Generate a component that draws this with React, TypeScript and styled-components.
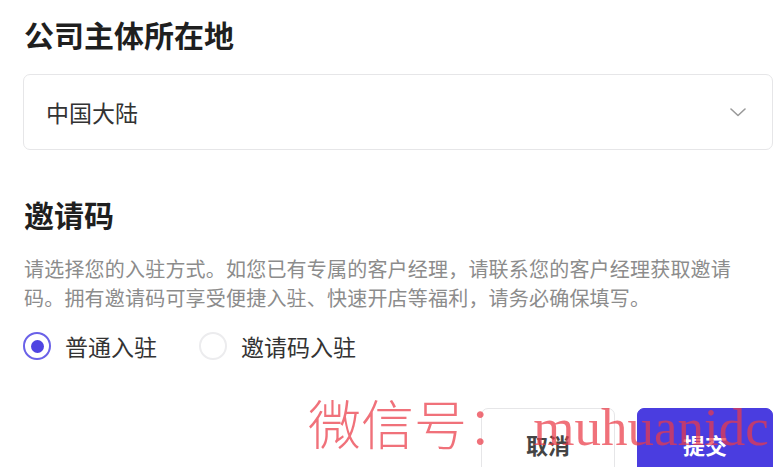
import React, { useState } from "react";
import styled, { createGlobalStyle } from "styled-components";

const Global = createGlobalStyle`
  html, body { margin: 0; padding: 0; background: #ffffff; overflow: hidden; }
  body { font-family: "Noto Sans CJK SC", "Noto Sans", sans-serif; color: #2b2b2b; }
  * { box-sizing: border-box; }
`;

const Page = styled.div`
  position: relative;
  width: 782px;
  height: 467px;
  overflow: hidden;
  padding: 14px 9px 0 23px;
  display: flex;
  flex-direction: column;
  & > * { flex-shrink: 0; }
`;

const SectionTitle = styled.h2<{ $gap?: number }>`
  margin: ${(p) => p.$gap ?? 0}px 0 0 1px;
  font-size: 30px;
  line-height: 40px;
  font-weight: 600;
  color: #1f1f1f;
`;

const Select = styled.div`
  margin-top: 20px;
  height: 76px;
  border: 1.5px solid #e6e6e8;
  border-radius: 7px;
  display: flex;
  align-items: center;
  justify-content: space-between;
  padding: 0 26px 0 22px;
`;

const SelectValue = styled.span`
  font-size: 23px;
  color: #333333;
`;

const Description = styled.p`
  margin: 20px 0 0 1px;
  max-width: 722px;
  font-size: 20px;
  line-height: 29px;
  letter-spacing: 0.2px;
  color: #8c8c8c;
`;

const RadioRow = styled.div`
  margin-top: 20px;
  display: flex;
  align-items: center;
  gap: 42px;
`;

const RadioOption = styled.label`
  display: flex;
  align-items: center;
  gap: 14px;
  cursor: pointer;
`;

const RadioCircle = styled.span<{ $checked: boolean }>`
  width: 28px;
  height: 28px;
  border-radius: 50%;
  border: 2px solid ${(p) => (p.$checked ? "#6a61e8" : "#ececee")};
  display: flex;
  align-items: center;
  justify-content: center;
  &::after {
    content: "";
    width: 13px;
    height: 13px;
    border-radius: 50%;
    background: #4f44e2;
    display: ${(p) => (p.$checked ? "block" : "none")};
  }
`;

const RadioLabel = styled.span`
  font-size: 23px;
  line-height: 28px;
  color: #333333;
`;

const ButtonRow = styled.div`
  margin-top: 48px;
  display: flex;
  justify-content: flex-end;
  gap: 22px;
`;

const Button = styled.button<{ $primary?: boolean }>`
  width: ${(p) => (p.$primary ? 136 : 134)}px;
  height: 72px;
  border-radius: 7px;
  border: 1.5px solid ${(p) => (p.$primary ? "#4a3de0" : "#e6e6e8")};
  background: ${(p) => (p.$primary ? "#4a3de0" : "#ffffff")};
  color: ${(p) => (p.$primary ? "#ffffff" : "#444444")};
  font-family: "Noto Sans CJK SC", sans-serif;
  font-size: 22px;
  font-weight: 700;
  padding: 0;
  cursor: pointer;
`;

const Watermark = styled.div`
  position: absolute;
  left: 308px;
  top: 401px;
  font-family: "Liberation Serif", "Noto Sans CJK SC", serif;
  font-size: 53px;
  line-height: 1;
  font-weight: 200;
  color: rgba(234, 58, 70, 0.72);
  white-space: nowrap;
  pointer-events: none;
`;

const Chevron = () => (
  <svg width="16" height="9" viewBox="0 0 16 9" fill="none">
    <path d="M1 1l7 6.5L15 1" stroke="#9a9a9a" strokeWidth="1.6" strokeLinecap="round" strokeLinejoin="round" />
  </svg>
);

export default function App() {
  const [mode, setMode] = useState("normal");
  return (
    <>
      <Global />
      <Page>
        <SectionTitle>公司主体所在地</SectionTitle>
        <Select>
          <SelectValue>中国大陆</SelectValue>
          <Chevron />
        </Select>
        <SectionTitle $gap={44}>邀请码</SectionTitle>
        <Description>
          请选择您的入驻方式。如您已有专属的客户经理，请联系您的客户经理获取邀请码。拥有邀请码可享受便捷入驻、快速开店等福利，请务必确保填写。
        </Description>
        <RadioRow>
          <RadioOption onClick={() => setMode("normal")}>
            <RadioCircle $checked={mode === "normal"} />
            <RadioLabel>普通入驻</RadioLabel>
          </RadioOption>
          <RadioOption onClick={() => setMode("invite")}>
            <RadioCircle $checked={mode === "invite"} />
            <RadioLabel>邀请码入驻</RadioLabel>
          </RadioOption>
        </RadioRow>
        <ButtonRow>
          <Button>取消</Button>
          <Button $primary>提交</Button>
        </ButtonRow>
        <Watermark>微信号： muhuanidc</Watermark>
      </Page>
    </>
  );
}
